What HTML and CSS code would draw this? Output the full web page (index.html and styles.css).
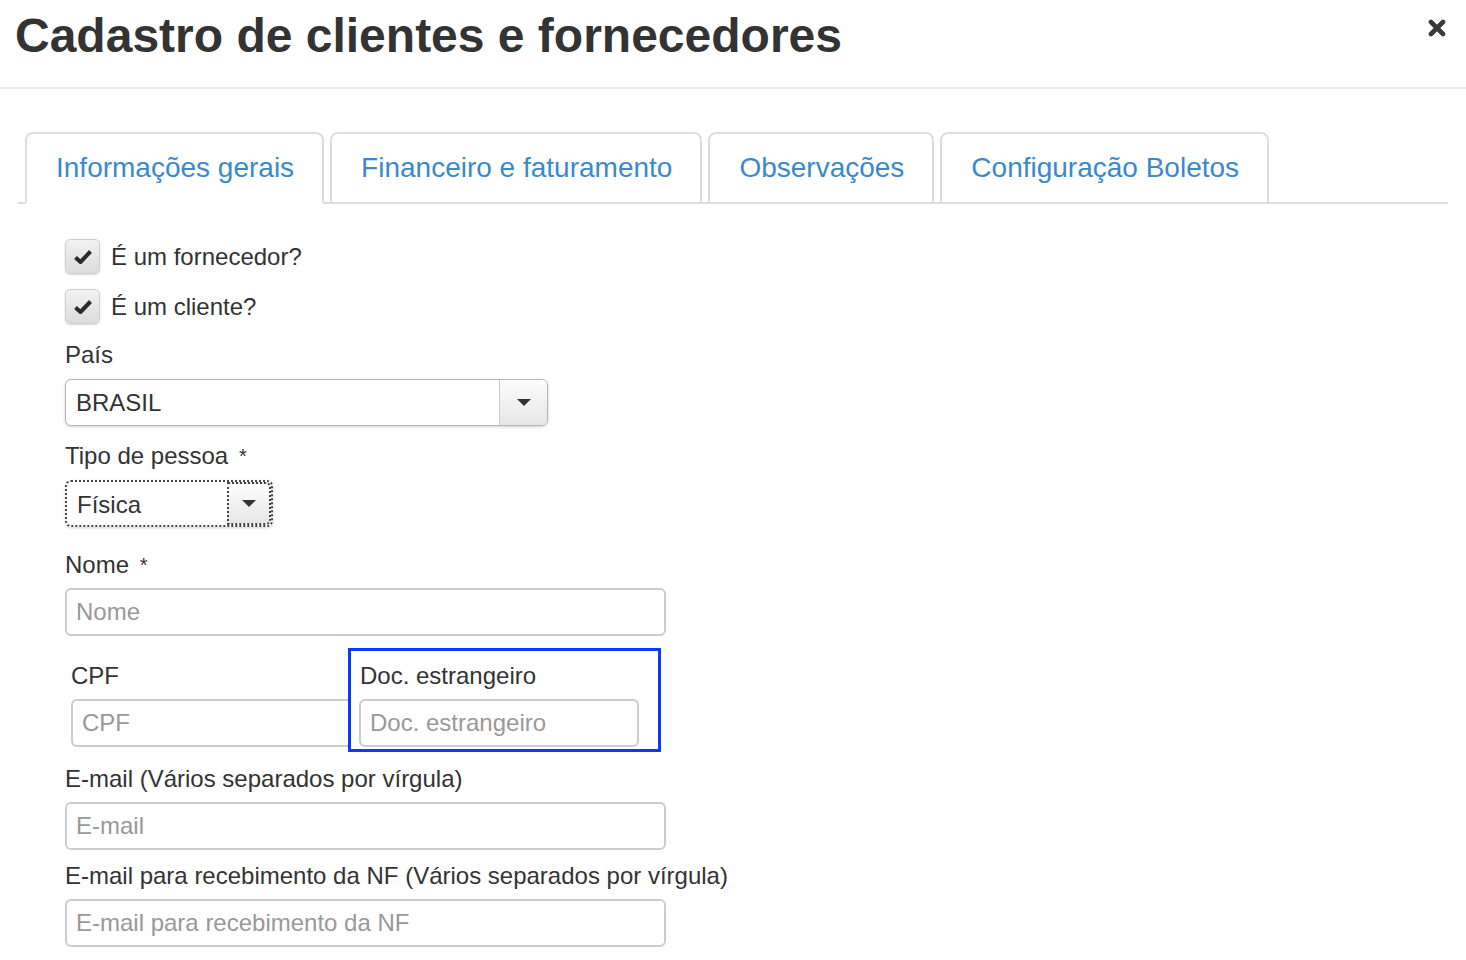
FILE: index.html
```html
<!DOCTYPE html>
<html lang="pt-BR">
<head>
    <meta charset="UTF-8">
    <meta name="viewport" content="width=device-width, initial-scale=1.0">
    <title>Cadastro de clientes e fornecedores</title>
    <link rel="stylesheet" href="styles.css">
</head>
<body>
    <header class="modal-header">
        <h1 class="modal-title">Cadastro de clientes e fornecedores</h1>
        <button class="close-btn" type="button" aria-label="Fechar">
            <svg width="18" height="18" viewBox="0 0 18 18">
                <path d="M3 3 L15 15 M15 3 L3 15" stroke="#3a3a3a" stroke-width="4.6" stroke-linecap="round" fill="none"/>
            </svg>
        </button>
    </header>

    <nav class="tabs">
        <a href="#" class="tab active">Informações gerais</a>
        <a href="#" class="tab">Financeiro e faturamento</a>
        <a href="#" class="tab">Observações</a>
        <a href="#" class="tab">Configuração Boletos</a>
    </nav>

    <main class="form">
        <label class="check-row">
            <span class="checkbox">
                <svg width="22" height="22" viewBox="0 0 22 22"><path d="M3.5 11.5 L8.5 16 L18.5 5.5" stroke="#2b2b2b" stroke-width="4" fill="none" stroke-linejoin="round"/></svg>
            </span>
            É um fornecedor?
        </label>
        <label class="check-row second">
            <span class="checkbox">
                <svg width="22" height="22" viewBox="0 0 22 22"><path d="M3.5 11.5 L8.5 16 L18.5 5.5" stroke="#2b2b2b" stroke-width="4" fill="none" stroke-linejoin="round"/></svg>
            </span>
            É um cliente?
        </label>

        <div class="field-label label-pais">País</div>
        <div class="select select-pais">
            <span class="select-value">BRASIL</span>
            <span class="select-arrow"><span class="caret"></span></span>
        </div>

        <div class="field-label label-tipo">Tipo de pessoa <span class="req">*</span></div>
        <div class="select select-tipo focused">
            <span class="select-value">Física</span>
            <span class="select-arrow"><span class="caret"></span></span>
        </div>

        <div class="field-label label-nome">Nome <span class="req">*</span></div>
        <input class="text-input" type="text" placeholder="Nome">

        <div class="doc-row">
            <div class="doc-col">
                <div class="field-label">CPF</div>
                <input class="text-input" type="text" placeholder="CPF">
            </div>
            <div class="doc-col highlight">
                <div class="field-label">Doc. estrangeiro</div>
                <input class="text-input" type="text" placeholder="Doc. estrangeiro">
            </div>
        </div>

        <div class="field-label label-email">E-mail (Vários separados por vírgula)</div>
        <input class="text-input" type="text" placeholder="E-mail">

        <div class="field-label label-nf">E-mail para recebimento da NF (Vários separados por vírgula)</div>
        <input class="text-input" type="text" placeholder="E-mail para recebimento da NF">
    </main>
</body>
</html>
```

FILE: styles.css
```css
* {
    margin: 0;
    padding: 0;
    box-sizing: border-box;
    font-family: 'Liberation Sans', Arial, sans-serif;
}

body {
    background: #fff;
    color: #333;
    overflow: hidden;
}

.modal-header {
    display: flex;
    justify-content: space-between;
    align-items: flex-start;
    padding: 12px 20px 27px 15px;
    border-bottom: 2px solid #ececec;
}

.modal-title {
    font-size: 48px;
    line-height: 48px;
    font-weight: 700;
    color: #333;
}

.close-btn {
    background: none;
    border: none;
    margin-top: 7px;
    cursor: pointer;
    display: block;
}

.tabs {
    display: flex;
    gap: 6px;
    margin: 43px 18px 0 18px;
    padding-left: 7px;
    border-bottom: 2px solid #ddd;
}

.tab {
    display: block;
    font-size: 28px;
    line-height: 40px;
    padding: 14px 28px 14px 29px;
    color: #3b89cb;
    text-decoration: none;
    border: 2px solid #ddd;
    border-radius: 8px 8px 0 0;
    margin-bottom: -2px;
}

.tab.active {
    border-bottom-color: #fff;
}

.form {
    display: flex;
    flex-direction: column;
    align-items: flex-start;
    padding: 35px 0 0 65px;
}

.check-row {
    display: flex;
    align-items: center;
    gap: 11px;
    font-size: 24px;
    height: 35px;
    color: #333;
}

.check-row.second {
    margin-top: 15px;
}

.checkbox {
    width: 35px;
    height: 35px;
    border-radius: 5px;
    border: 1px solid #cfcfcf;
    background: linear-gradient(180deg, #f2f2f2, #dcdcdc);
    box-shadow: 0 1px 2px rgba(0, 0, 0, 0.15);
    display: flex;
    align-items: center;
    justify-content: center;
}

.field-label {
    font-size: 24px;
    line-height: 34px;
    color: #333;
    margin-bottom: 6px;
}

.req {
    font-size: 20px;
    vertical-align: top;
    margin-left: 4px;
}

.label-pais { margin-top: 14px; margin-bottom: 7px; }
.label-tipo { margin-top: 13px; margin-bottom: 7px; }
.label-nome { margin-top: 21px; }
.label-email { margin-top: 10px; }
.label-nf { margin-top: 9px; }

.select {
    display: flex;
    height: 47px;
    border: 1px solid #b5b5b5;
    border-radius: 6px;
    background: #fff;
    box-shadow: 0 1px 3px rgba(0, 0, 0, 0.18);
}

.select-pais { width: 483px; }
.select-tipo { width: 208px; }

.select-value {
    flex: 1;
    font-size: 24px;
    line-height: 45px;
    padding-left: 10px;
    color: #333;
}

.select-arrow {
    width: 48px;
    border-left: 1px solid #ccc;
    border-radius: 0 5px 5px 0;
    background: linear-gradient(180deg, #fdfdfd, #e6e6e6);
    display: flex;
    align-items: center;
    justify-content: center;
}

.select-tipo .select-arrow {
    width: 44px;
}

.caret {
    width: 0;
    height: 0;
    border-top: 7px solid #333;
    border-left: 7px solid transparent;
    border-right: 7px solid transparent;
}

.select.focused {
    border: 2px dotted #444;
}

.select.focused .select-arrow {
    border: 2px dotted #444;
}

.text-input {
    width: 601px;
    height: 48px;
    border: 2px solid #ccc;
    border-radius: 6px;
    padding: 0 9px;
    font-size: 24px;
    color: #333;
    background: #fff;
    outline: none;
}

.text-input::placeholder {
    color: #999;
}

.doc-row {
    display: flex;
    align-items: flex-start;
    margin-top: 12px;
    padding-left: 6px;
}

.doc-col {
    width: 277px;
    padding-top: 11px;
}

.doc-col .text-input {
    width: 100%;
    border-right-width: 0;
    border-radius: 6px 0 0 6px;
}

.doc-col.highlight {
    width: 313px;
    border: 3px solid #0b3cf5;
    padding: 8px 19px 2px 8px;
}

.doc-col.highlight .text-input {
    border-right-width: 2px;
    border-radius: 6px;
}

.doc-col.highlight .field-label {
    padding-left: 1px;
}
```
